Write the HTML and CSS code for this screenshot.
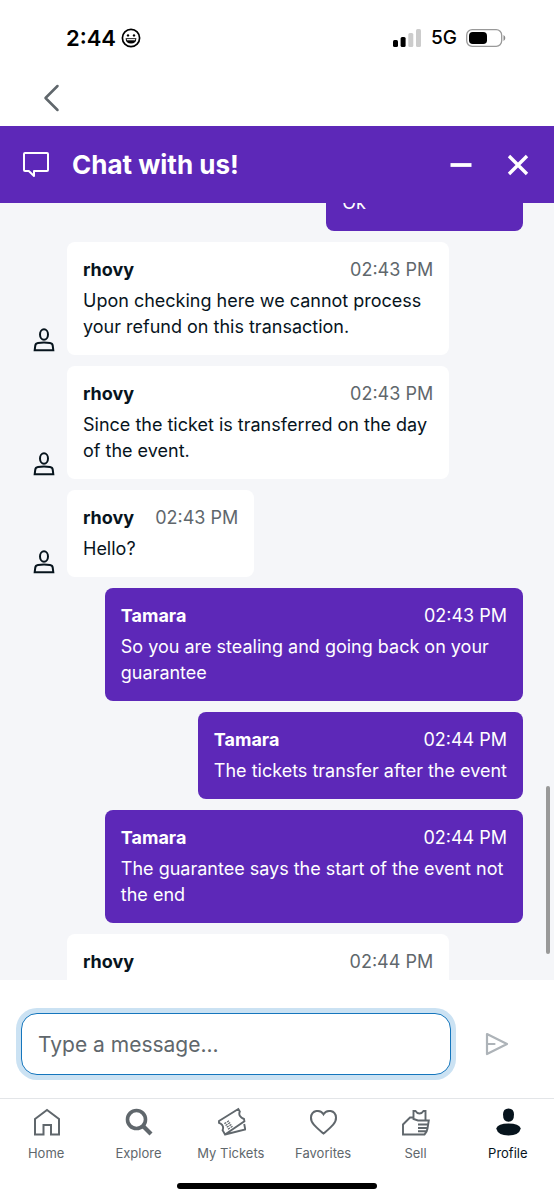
FILE: index.html
```html
<!DOCTYPE html>
<html lang="en">
<head>
<meta charset="utf-8">
<meta name="viewport" content="width=device-width, initial-scale=1">
<title>Chat with us!</title>
<link rel="stylesheet" href="styles.css">
</head>
<body>
<svg class="sprite" aria-hidden="true">
  <symbol id="agent" viewBox="0 0 22 24">
    <ellipse cx="11" cy="6.500" rx="4" ry="5.200"/>
    <path d="M1.700 22.200 2.300 17.500Q2.600 15.400 5 15Q11 13.900 17 15Q19.400 15.400 19.700 17.500L20.300 22.200Z"/>
  </symbol>
</svg>
<div class="status">
  <div class="status-left">
    <span class="clock">2:44</span>
    <svg width="20" height="20" viewBox="0 0 20 20"><circle cx="10" cy="10" r="8.600" fill="none" stroke="#000" stroke-width="1.700"/><circle cx="7" cy="7.400" r="1.200"/><circle cx="13" cy="7.400" r="1.200"/><path d="M4.600 10.200H15.400Q15.200 15.600 10 15.600T4.600 10.200Z"/><path d="M5.800 11.700H14.200" stroke="#fff" stroke-width="1.200"/></svg>
  </div>
  <div class="status-right">
    <svg width="30" height="18" viewBox="0 0 30 18"><rect x="1" y="11" width="5" height="7" rx="1.500"/><rect x="8.600" y="8" width="5" height="10" rx="1.500"/><g fill="#ccc"><rect x="16.300" y="4" width="5" height="14" rx="1.500"/><rect x="24" y="0" width="5" height="18" rx="1.500"/></g></svg>
    <span class="network">5G</span>
    <svg width="40" height="18" viewBox="0 0 40 18"><rect x=".7" y=".7" width="35" height="16.600" rx="5.500" fill="none" stroke="#999" stroke-width="1.300"/><rect x="3" y="3" width="18" height="12" rx="3.800"/><path d="M37.500 6Q39.300 7 39.300 9T37.500 12Z" fill="#888"/></svg>
  </div>
</div>
<nav class="back-row"><button class="icon-button" aria-label="Back"><svg width="20" height="28" viewBox="0 0 20 28" fill="none" stroke="#60676c" stroke-width="2.500" stroke-linecap="round" stroke-linejoin="round"><path d="M16.500 2 4.500 14 16.500 26"/></svg></button></nav>
<header class="chat-header">
  <svg width="28" height="28" viewBox="0 0 28 28" fill="none" stroke="#fff" stroke-width="2" stroke-linejoin="round"><path d="M3 2H25Q26 2 26 3V19Q26 20 25 20H12V25L6.800 20H3Q2 20 2 19V3Q2 2 3 2Z"/></svg>
  <h1>Chat with us!</h1>
  <button class="icon-button" aria-label="Minimize"><svg width="22" height="22" viewBox="0 0 22 22"><path d="M.5 11H21.500" stroke="#fff" stroke-width="3.800"/></svg></button>
  <button class="icon-button" aria-label="Close"><svg width="22" height="22" viewBox="0 0 22 22"><path d="M2 2 20 20M20 2 2 20" stroke="#fff" stroke-width="3.400"/></svg></button>
</header>
<main class="chat">
  <div class="messages">
    <article class="row mine brief"><div class="bubble"><p>Ok</p></div></article>
    <article class="row"><svg class="avatar"><use href="#agent"/></svg><div class="bubble"><div class="meta"><b>rhovy</b><time>02:43 PM</time></div><p>Upon checking here we cannot process your refund on this transaction.</p></div></article>
    <article class="row"><svg class="avatar"><use href="#agent"/></svg><div class="bubble"><div class="meta"><b>rhovy</b><time>02:43 PM</time></div><p>Since the ticket is transferred on the day of the event.</p></div></article>
    <article class="row"><svg class="avatar"><use href="#agent"/></svg><div class="bubble"><div class="meta"><b>rhovy</b><time>02:43 PM</time></div><p>Hello?</p></div></article>
    <article class="row mine"><div class="bubble"><div class="meta"><b>Tamara</b><time>02:43 PM</time></div><p>So you are stealing and going back on your guarantee</p></div></article>
    <article class="row mine"><div class="bubble"><div class="meta"><b>Tamara</b><time>02:44 PM</time></div><p>The tickets transfer after the event</p></div></article>
    <article class="row mine"><div class="bubble"><div class="meta"><b>Tamara</b><time>02:44 PM</time></div><p>The guarantee says the start of the event not the end</p></div></article>
    <article class="row wide"><div class="bubble"><div class="meta"><b>rhovy</b><time>02:44 PM</time></div></div></article>
  </div>
  <div class="scroll-thumb"></div>
</main>
<form class="composer">
  <input type="text" class="message-input" placeholder="Type a message..." aria-label="Type a message">
  <button type="button" class="icon-button" aria-label="Send"><svg width="24" height="24" viewBox="0 0 24 24" fill="none" stroke="#adb3b8" stroke-width="2.200" stroke-linecap="round" stroke-linejoin="round"><path d="M2 2 22 12 2 22ZM2 12H9.500"/></svg></button>
</form>
<nav class="tabs">
  <a href="#home"><svg viewBox="0 0 30 30"><path d="M4 12 16 3 28 12V27.500H20V18H12.500V27.500H4Z"/></svg>Home</a>
  <a href="#explore"><svg viewBox="0 0 30 30"><circle cx="13.500" cy="12.500" r="9" stroke-width="3.600"/><path d="M20 19 28 27" stroke-width="4.200"/></svg>Explore</a>
  <a href="#tickets"><svg viewBox="0 0 30 30"><path d="M3 14 22.300 2 23.800 4.500Q22.700 7 24 9T28 12L28.400 14.200 9 27.500 6.600 23.200Q7.800 20.500 6.300 18.200 5 16.500 3 15.900ZM9 27.500 29.300 22.500 28.200 17" stroke-width="1.900"/><path d="M9 15.500 13.500 22.500M11.700 13.800 16.200 20.800" stroke-width="2.300" stroke-dasharray="1.200 1"/></svg>My Tickets</a>
  <a href="#favorites"><svg viewBox="0 0 30 30"><path d="M15.500 7.300C12.500 2 3.500 3 3 10.500 2.500 16 8.500 20.500 15.500 26.500 22.500 20.500 28.500 16 28 10.500 27.500 3 18.500 2 15.500 7.300Z"/></svg>Favorites</a>
  <a href="#sell"><svg viewBox="0 0 30 30"><path d="M13.500 10.500H10L3 17.500V27.500H24.500Q27 25 27.500 21.500L28.800 13.500H18L13.500 12V4H15.500Q17 6.500 19.500 6.500T23.500 4H25.500V13.500M18 17.500H28M18 21H27.500M18 24.300H26.500" stroke-width="1.900"/></svg>Sell</a>
  <a href="#profile" class="active" aria-current="page"><svg viewBox="0 0 30 30"><g fill="#07141d" stroke="none"><path d="M15.500 1.500Q21 1.500 21 7.500 21 14.800 15.500 14.800T10 7.500Q10 1.500 15.500 1.500Z"/><path d="M15.500 16.500Q26 16.500 27.800 21.500 26 28.500 15.500 28.500T3.200 21.500Q5 16.500 15.500 16.500Z"/></g></svg>Profile</a>
</nav>
<div class="home-bar"><span></span></div>
</body>
</html>
```

FILE: styles.css
```css
* { box-sizing: border-box; }
body {
  margin: 0;
  height: 100vh;
  display: flex;
  flex-direction: column;
  background: #fff;
  color: #07141d;
  font-family: Inter, "Liberation Sans", sans-serif;
  font-size: 18px;
  line-height: 26px;
}
svg { display: block; flex: none; }
.sprite { width: 0; height: 0; position: absolute; }
.icon-button { padding: 0; border: 0; background: none; display: flex; }
.status {
  display: flex;
  justify-content: space-between;
  align-items: center;
  padding: 0 48px 0 66px;
  height: 75px;
  color: #000;
}
.status-left, .status-right { display: flex; align-items: center; }
.status-left { gap: 5px; }
.status-right { gap: 9px; }
.clock { font-size: 22px; font-weight: 600; }
.network { font-size: 19px; font-weight: 500; }
.back-row { height: 51px; padding: 9px 41px; }
.chat-header {
  display: flex;
  align-items: center;
  height: 77px;
  padding: 0 25px 0 22px;
  background: #5d28b8;
  color: #fff;
}
.chat-header h1 {
  flex: 1;
  margin: 0;
  padding-left: 22px;
  font-size: 26px;
  line-height: 32px;
}
.chat-header .icon-button + .icon-button { margin-left: 35px; }
.chat {
  position: relative;
  flex: 1;
  min-height: 0;
  overflow: hidden;
  background: #f5f6f9;
}
.messages {
  display: flex;
  flex-direction: column;
  gap: 11px;
  margin-top: -28px;
  padding: 0 31px;
}
.row { display: flex; max-width: 85%; align-self: flex-start; align-items: flex-end; }
.mine { align-self: flex-end; }
.wide { width: 85%; padding-left: 36px; }
.brief { width: 40%; }
.wide .bubble, .brief .bubble { flex: 1; }
.avatar { width: 22px; height: 24px; margin: 0 12px 3px 2px; fill: none; stroke: #07141d; stroke-width: 2; }
.bubble { padding: 15px 16px; border-radius: 8px; background: #fff; }
.mine .bubble { background: #5d28b8; color: #fff; }
.bubble p { margin: 0; }
.meta { display: flex; justify-content: space-between; gap: 21px; margin-bottom: 5px; }
.meta time { color: #60676c; }
.mine time { color: inherit; }
.scroll-thumb {
  position: absolute;
  right: 4px;
  top: 75%;
  width: 4px;
  height: 168px;
  border-radius: 2px;
  background: #999;
}
.composer {
  display: flex;
  align-items: center;
  gap: 34px;
  height: 118px;
  padding: 10px 45px 0 21px;
}
.message-input {
  flex: 1;
  min-width: 0;
  height: 62px;
  padding: 0 16px;
  border: 1px solid #1576bd;
  border-radius: 16px;
  outline: 0;
  box-shadow: 0 0 0 5px #cbe2f3;
  background: #fff;
  color: #07141d;
  font: inherit;
  font-size: 21px;
}
.message-input::placeholder { color: #60676c; opacity: 1; }
.tabs {
  display: grid;
  grid-template-columns: repeat(6, 1fr);
  border-top: 1px solid #e3e5e8;
  padding-top: 8px;
}
.tabs a {
  display: flex;
  flex-direction: column;
  align-items: center;
  gap: 6px;
  color: #60676c;
  font-size: 13px;
  line-height: 20px;
  text-decoration: none;
}
.tabs svg { width: 30px; height: 30px; fill: none; stroke: #60676c; stroke-width: 2; }
.tabs .active { color: #07141d; }
.home-bar { display: flex; justify-content: center; padding: 20px 0 11px; }
.home-bar span { width: 36%; height: 6px; border-radius: 3px; background: #000; }
```
